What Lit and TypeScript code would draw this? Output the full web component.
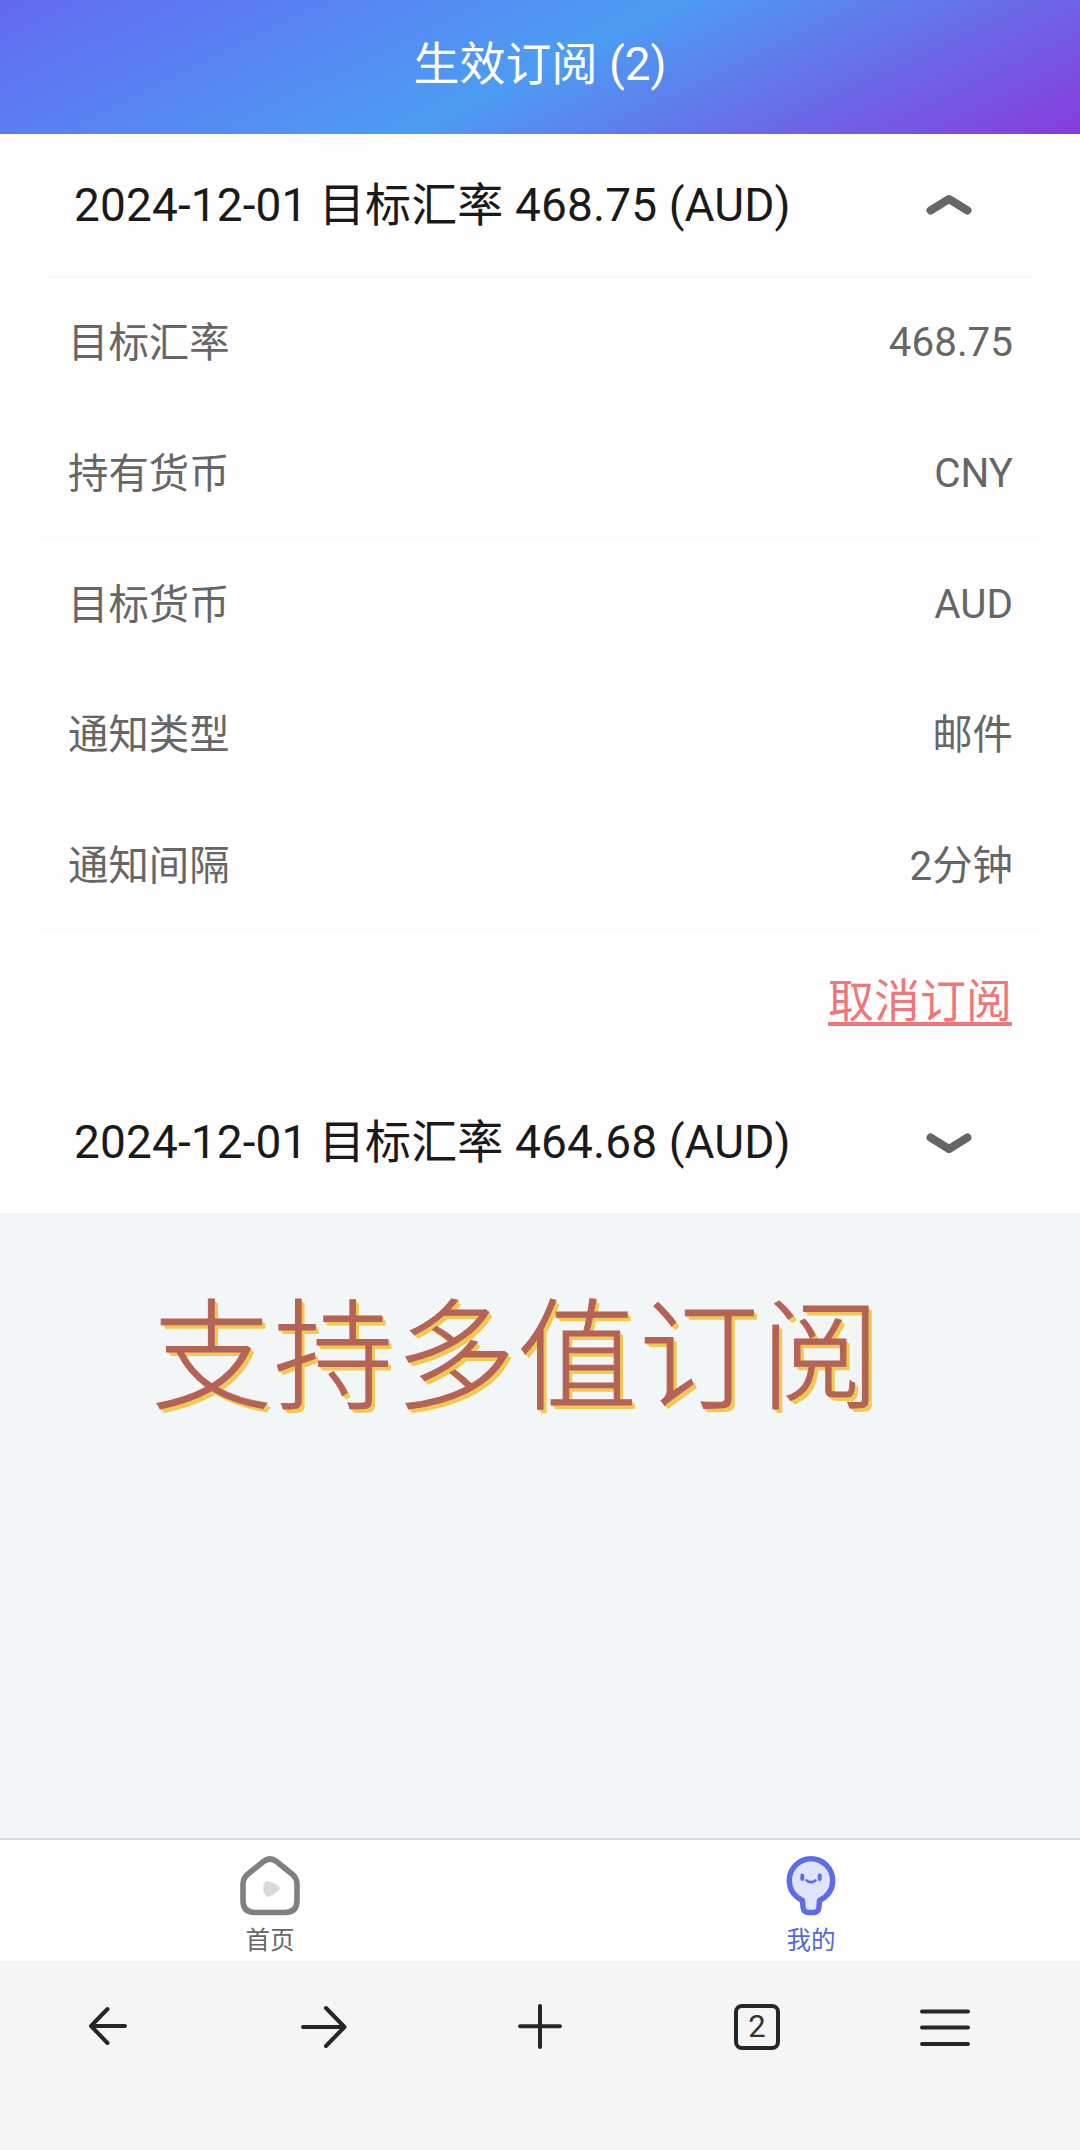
import { LitElement, html, css, svg } from "lit";
import { customElement, property } from "lit/decorators.js";

interface Subscription {
  title: string;
  open: boolean;
  details: Array<[string, string]>;
}

const SUBSCRIPTIONS: Subscription[] = [
  {
    title: "2024-12-01 目标汇率 468.75 (AUD)",
    open: true,
    details: [
      ["目标汇率", "468.75"],
      ["持有货币", "CNY"],
      ["目标货币", "AUD"],
      ["通知类型", "邮件"],
      ["通知间隔", "2分钟"],
    ],
  },
  { title: "2024-12-01 目标汇率 464.68 (AUD)", open: false, details: [] },
];

const isLatin = (text: string) => /^[\x20-\x7e]+$/.test(text);

@customElement("subscription-item")
export class SubscriptionItem extends LitElement {
  @property({ attribute: false }) item!: Subscription;

  static styles = css`
    :host {
      display: block;
      background: #fefefe;
    }
    .head {
      display: flex;
      align-items: center;
      justify-content: space-between;
      height: 143px;
      box-sizing: border-box;
      margin: 0 44px;
      padding: 0 63px 0 30px;
      font-size: 46px;
      color: #1a1a1a;
    }
    .head.open {
      height: 144px;
      border-bottom: 2px solid #f8f9fa;
    }
    .title {
      white-space: nowrap;
      letter-spacing: 0.12px;
      padding-bottom: 8px;
    }
    .chevron {
      width: 48px;
      height: 24px;
      display: block;
    }
    .row {
      display: flex;
      align-items: center;
      justify-content: space-between;
      height: 130.7px;
      box-sizing: border-box;
      margin: 0 36px;
      padding: 0 31px 0 32px;
      font-size: 40.4px;
      color: #666;
      border-bottom: 2px solid #fafbfb;
    }
    .row.faint {
      border-bottom-color: #fdfdfd;
    }
    .cjk {
      padding-bottom: 5px;
    }
    .latin {
      padding-top: 1px;
    }
    .actions {
      display: flex;
      justify-content: flex-end;
      align-items: center;
      height: 139px;
      padding: 0 68px 0;
      box-sizing: border-box;
    }
    .cancel {
      font-size: 46px;
      line-height: 60px;
      color: #ef7777;
      text-decoration: underline;
      text-decoration-thickness: 4px;
      text-underline-offset: 5px;
      text-decoration-skip-ink: none;
    }
  `;

  render() {
    const { title, open, details } = this.item;
    return html`
      <div class="head ${open ? "open" : ""}">
        <span class="title">${title}</span>
        <svg class="chevron" viewBox="0 0 48 24" fill="none" stroke="#666" stroke-width="8" stroke-linecap="round" stroke-linejoin="round">
          ${open ? svg`<path d="M5.5 17.5 L24 6 L42.5 17.5" />` : svg`<path d="M5.5 7.5 L24 19 L42.5 7.5" />`}
        </svg>
      </div>
      ${open
        ? html`
            ${details.map(
              ([label, value], i) => html`
                <div class="row ${i === 0 || i === 2 ? "faint" : ""}">
                  <span class="cjk">${label}</span>
                  <span class=${isLatin(value) ? "latin" : "cjk"}>${value}</span>
                </div>
              `
            )}
            <div class="actions"><a class="cancel">取消订阅</a></div>
          `
        : null}
    `;
  }
}

@customElement("app-root")
export class AppRoot extends LitElement {
  static styles = css`
    :host {
      display: flex;
      flex-direction: column;
      height: 2150px;
      width: 1080px;
      overflow: hidden;
      background: #f3f6f7;
      font-family: Roboto, "Noto Sans CJK SC", sans-serif;
    }
    .header {
      flex: none;
      display: flex;
      align-items: center;
      justify-content: center;
      height: 134px;
      box-sizing: border-box;
      padding-bottom: 14px;
      background: linear-gradient(154deg, #636af0 0%, #4d9cf3 50%, #863bdc 100%);
      color: #fff;
      font-size: 46px;
    }
    .slogan-area {
      flex: 1;
      display: flex;
      justify-content: center;
      padding: 61px 46px 0 0;
    }
    .slogan {
      font-size: 120px;
      line-height: 170px;
      font-weight: 300;
      letter-spacing: 1.8px;
      white-space: nowrap;
      color: #b56357;
      -webkit-text-stroke: 1px #b56357;
      text-shadow: 1.8px 1.8px 0 #efca52, 3.6px 3.6px 0 #efca52;
    }
    .tabs {
      flex: none;
      display: grid;
      grid-template-columns: 1fr 1fr;
      height: 123px;
      box-sizing: border-box;
      border-top: 2px solid #d9dcde;
      background: #fff;
    }
    .tab {
      display: flex;
      flex-direction: column;
      align-items: center;
      padding-top: 14px;
      font-size: 24.5px;
      line-height: 32px;
      color: #666;
    }
    .tab.active {
      color: #5468d8;
      padding-left: 2px;
    }
    .tab svg {
      width: 64px;
      height: 64px;
      display: block;
      margin-bottom: 7px;
    }
    .browser {
      flex: none;
      display: grid;
      grid-template-columns: 216px 216px 216px 216px 162px;
      height: 189px;
      background: #f5f5f5;
      align-items: start;
      justify-items: center;
      box-sizing: border-box;
      padding-top: 38px;
    }
    .browser svg {
      width: 56px;
      height: 56px;
      fill: none;
      stroke: #262626;
      stroke-width: 4;
      stroke-linecap: round;
      stroke-linejoin: round;
    }
    .count {
      width: 46px;
      height: 46px;
      box-sizing: border-box;
      margin-top: 4.5px;
      margin-left: 2px;
      border: 4px solid #262626;
      border-radius: 8px;
      display: flex;
      align-items: center;
      justify-content: center;
      font-size: 31px;
      line-height: 38px;
      color: #333;
    }
  `;

  render() {
    return html`
      <header class="header">生效订阅 (2)</header>
      <main>
        ${SUBSCRIPTIONS.map((s) => html`<subscription-item .item=${s}></subscription-item>`)}
      </main>
      <div class="slogan-area"><div class="slogan">支持多值订阅</div></div>
      <nav class="tabs">
        <div class="tab">
          <svg viewBox="0 0 64 64" fill="none">
            <path d="M25.5 7.5 Q32 2.5 38.5 7.5 L54 20 Q59 24 59 30 V46.5 Q59 58.5 47 58.5 H17 Q5 58.5 5 46.5 V30 Q5 24 10 20 Z" stroke="#808080" stroke-width="5.6" stroke-linejoin="round" />
            <path d="M27 27.5 Q30 25.5 38.5 30.5 Q45 34.5 38.5 38.5 Q31 44 28 42.5 Q23 36 27 27.5 Z" fill="#dadada" />
          </svg>
          <span>首页</span>
        </div>
        <div class="tab active">
          <svg viewBox="0 0 64 64" fill="none">
            <path d="M23.5 46.5 C14.5 42 10.3 35 10.3 26.5 A21.7 21.7 0 0 1 53.7 26.5 C53.7 35 49.5 42 40.5 46.5 L40 53 Q39.5 58.5 34.5 58.5 H29.5 Q24.5 58.5 24 53 Z" fill="#dfe3fc" stroke="#5b6ee8" stroke-width="5.4" stroke-linejoin="round" />
            <path d="M23.3 21.5 V25 M40.7 21.5 V25" stroke="#5b6ee8" stroke-width="4" stroke-linecap="round" />
            <path d="M27.5 26.5 Q32 30 36.5 26.5" stroke="#5b6ee8" stroke-width="2.8" stroke-linecap="round" />
          </svg>
          <span>我的</span>
        </div>
      </nav>
      <footer class="browser">
        <svg viewBox="0 0 56 56"><path d="M45 27 H11 M27.5 10 L11 27 L27.5 44" /></svg>
        <svg viewBox="0 0 56 56"><path d="M7 28 H48 M30 9 L48.5 28 L30 47" /></svg>
        <svg viewBox="0 0 56 56"><path d="M8 27.3 H48 M28 7 V48" /></svg>
        <div class="count">2</div>
        <svg viewBox="0 0 56 56"><path d="M5 12.5 H51 M5 28.5 H51 M5 45 H51" /></svg>
      </footer>
    `;
  }
}
